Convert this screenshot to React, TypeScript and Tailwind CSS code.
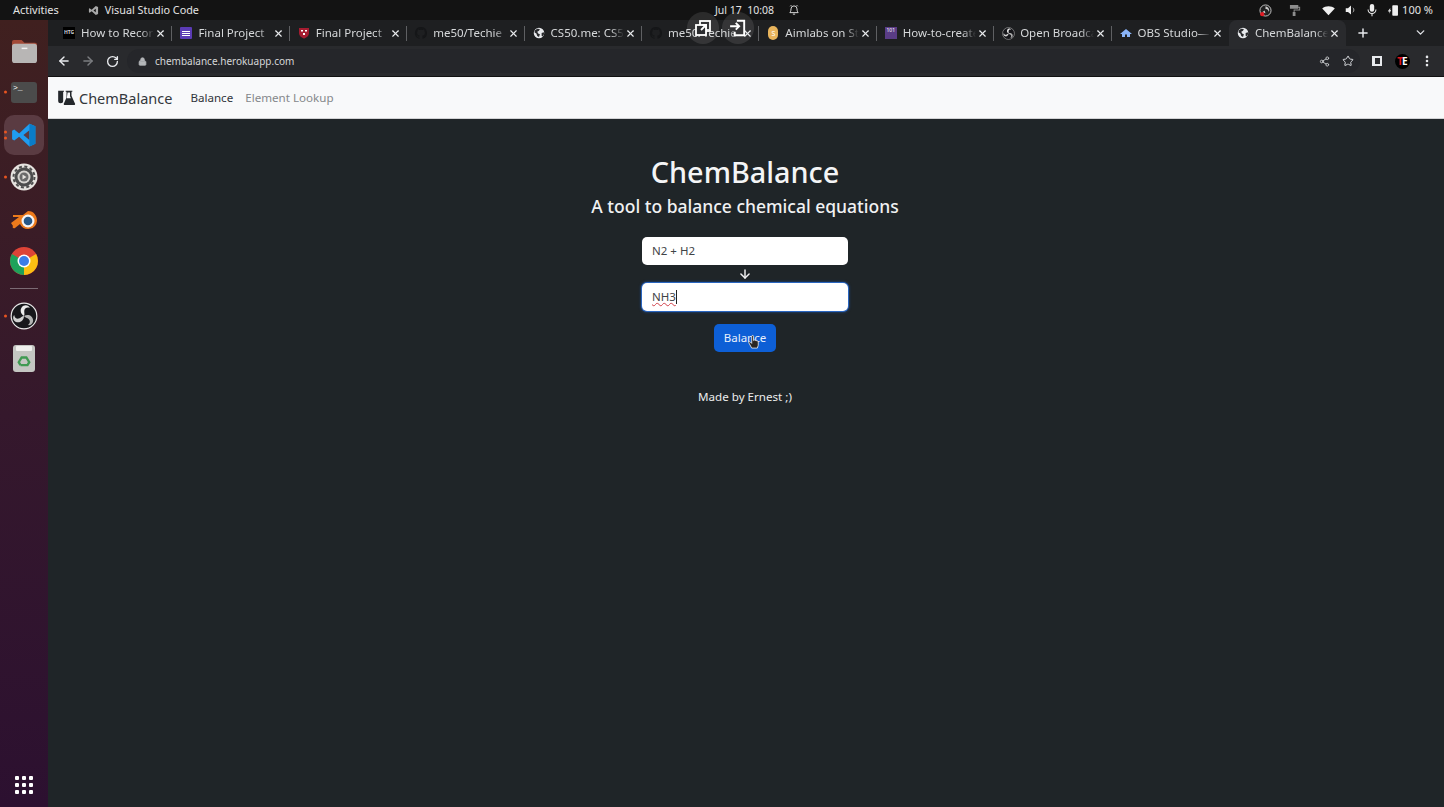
import { ArrowDown, ArrowLeft, ArrowRight, ChevronDown, Lock, MoreVertical, Plus, RotateCw, Share2, Star, X } from "lucide-react";

const sans = "font-['Noto_Sans',sans-serif]";

function Globe({ className = "" }: { className?: string }) {
  return (
    <svg viewBox="0 0 16 16" className={className}>
      <circle cx="8" cy="8" r="6" fill="#e8eaed" />
      <path d="M3 5l3-2 3 .5-1 2-2 1 1 2 2 1-1 3-2-1-1-3-2-1zM11 8l2.500-1 .5 2-2 3-1-1z" fill="#292a2d" />
    </svg>
  );
}

function GithubDark() {
  return (
    <svg viewBox="0 0 16 16" className="h-3.5 w-3.5 shrink-0" fill="#151618">
      <path d="M8 1a7 7 0 0 0-2.200 13.640c.350.060.480-.150.480-.340v-1.200c-1.950.420-2.360-.940-2.360-.940-.320-.810-.780-1.030-.780-1.030-.640-.430.050-.420.050-.420.700.050 1.070.720 1.070.720.630 1.070 1.640.760 2.040.580.060-.450.240-.760.440-.940-1.550-.180-3.190-.780-3.190-3.460 0-.760.270-1.390.720-1.880-.070-.180-.310-.890.070-1.850 0 0 .590-.190 1.920.720a6.700 6.700 0 0 1 3.500 0c1.330-.910 1.920-.720 1.920-.720.380.960.140 1.670.070 1.850.450.490.720 1.120.720 1.880 0 2.690-1.640 3.280-3.200 3.450.250.220.470.640.470 1.290v1.910c0 .190.130.410.480.340A7 7 0 0 0 8 1z" />
    </svg>
  );
}

function ObsMark({ size, ring = "#e8e8e8" }: { size: number; ring?: string }) {
  const blade = "M12 12C8.600 10 8 5.500 11.500 3.200 13.800 2 16.500 3.200 17 5.200 15 4.300 12.800 5 12.300 7c-.400 1.800.600 3.500-.300 5z";
  return (
    <svg width={size} height={size} viewBox="0 0 24 24" className="shrink-0">
      <circle cx="12" cy="12" r="11" fill="#17171b" stroke={ring} strokeWidth="1" />
      <path d={blade} fill="#ececec" />
      <path d={blade} fill="#b4b4b4" transform="rotate(120 12 12)" />
      <path d={blade} fill="#d0d0d0" transform="rotate(240 12 12)" />
    </svg>
  );
}

type Tab = { title: string; icon: React.ReactNode; active?: boolean };

const tabs: Tab[] = [
  { title: "How to Record", icon: <span className="flex h-3 w-3 items-center justify-center bg-black text-[5px] font-bold text-gray-300">HTG</span> },
  {
    title: "Final Project",
    icon: (
      <span className="flex h-3 w-3 flex-col items-center justify-center gap-[1px] rounded-[1px] bg-[#5b3bb5]">
        <span className="h-[1px] w-2 bg-white" />
        <span className="h-[1px] w-2 bg-white" />
        <span className="h-[1px] w-2 bg-white" />
      </span>
    ),
  },
  {
    title: "Final Project",
    icon: (
      <svg viewBox="0 0 12 12" className="h-3 w-3">
        <path d="M1 1h10v5c0 3-3 5-5 5.500C4 11 1 9 1 6z" fill="#a51c30" />
        <path d="M3 3h2v1.500H3zM7 3h2v1.500H7zM5 6h2v2H5z" fill="#fff" />
      </svg>
    ),
  },
  { title: "me50/Techie", icon: <GithubDark /> },
  { title: "CS50.me: CS50", icon: <Globe className="h-3.5 w-3.5" /> },
  { title: "me50/Techie", icon: <GithubDark /> },
  {
    title: "Aimlabs on Steam",
    icon: (
      <span className="flex h-3.5 w-2.5 items-center justify-center rounded-full bg-[#e8b45c] text-[7px] leading-none text-white">S</span>
    ),
  },
  {
    title: "How-to-create",
    icon: <span className="flex h-3 w-3 items-start justify-center bg-[#5a3c86] text-[5px] leading-[7px] text-white">101</span>,
  },
  { title: "Open Broadcaster", icon: <ObsMark size={13} ring="#bbb" /> },
  {
    title: "OBS Studio—",
    icon: (
      <svg viewBox="0 0 14 14" className="h-3.5 w-3.5">
        <path d="M1 8l6-5 6 5-2 0v3H8V8.500H6V11H3V8z" fill="#8ab4f8" />
      </svg>
    ),
  },
  { title: "ChemBalance", icon: <Globe className="h-3.5 w-3.5" />, active: true },
];

function TabItem({ tab, last }: { tab: Tab; last: boolean }) {
  return (
    <div
      className={`flex h-full w-[117.400px] shrink-0 items-center pl-[7px] ${
        tab.active ? "rounded-t-lg bg-[#292a2d]" : ""
      }`}
    >
      <span className="flex w-[14px] shrink-0 items-center justify-center">{tab.icon}</span>
      <span className="ml-[5px] min-w-0 flex-1 overflow-hidden whitespace-nowrap text-[11.500px] leading-4 text-[#d6d8da] [mask-image:linear-gradient(to_right,black_82%,transparent_100%)]">
        {tab.title}
      </span>
      <X className="ml-[1px] h-[11px] w-[11px] shrink-0 text-[#e8eaed]" strokeWidth={2.500} />
      <span className={`ml-[5px] h-[15px] w-px shrink-0 ${last || tab.active ? "" : "bg-[#5f6063]"}`} />
    </div>
  );
}

function TabStrip() {
  return (
    <div className="flex h-[26px] shrink-0 items-end bg-[#1e1f21] pl-[7px]">
      <div className="flex h-full">
        {tabs.map((tab, i) => (
          <TabItem key={i} tab={tab} last={i === tabs.length - 2} />
        ))}
      </div>
      <Plus className="ml-[10px] mb-[6px] h-[14px] w-[14px] text-[#e8eaed]" strokeWidth={2.500} />
      <ChevronDown className="ml-auto mr-[17px] mb-[7px] h-[13px] w-[13px] text-[#dfe1e5]" strokeWidth={2.500} />
    </div>
  );
}

function Toolbar() {
  return (
    <div className="flex h-[31px] shrink-0 items-center border-b border-[#111] bg-[#292a2d] pl-[9px] pr-[10px]">
      <ArrowLeft className="h-[14px] w-[14px] text-[#e8eaed]" strokeWidth={2.500} />
      <ArrowRight className="ml-[10px] h-[14px] w-[14px] text-[#7b7d80]" strokeWidth={2.500} />
      <RotateCw className="ml-[11px] h-[13px] w-[13px] text-[#e8eaed]" strokeWidth={2.500} />
      <div className="ml-[8px] flex h-[24px] flex-1 items-center rounded-full bg-[#25262a] pl-[11px] pr-[6px]">
        <Lock className="h-[9px] w-[9px] text-[#b4b6b9]" fill="#b4b6b9" strokeWidth={2} />
        <span className="ml-[8px] text-[10px] leading-4 text-[#d5d6d8]">chembalance.herokuapp.com</span>
        <Share2 className="ml-auto h-[11px] w-[11px] text-[#c8cacd]" strokeWidth={2} />
        <Star className="ml-[12px] h-[12px] w-[12px] text-[#d8dade]" strokeWidth={2} />
      </div>
      <span className="ml-[12px] flex h-[10px] w-[10px] items-center justify-end border-2 border-[#e8eaed] bg-[#e8eaed]">
        <span className="h-[6px] w-[5px] bg-[#292a2d]" />
      </span>
      <span className="relative ml-[13px] flex h-[15px] w-[15px] items-center justify-center rounded-full bg-black text-[10px] font-bold leading-none text-white">
        <span className="text-[#e0161b]">T</span>
        <span className="-ml-[1px]">E</span>
      </span>
      <MoreVertical className="ml-[10px] h-[14px] w-[14px] text-[#e8eaed]" strokeWidth={2.500} />
    </div>
  );
}

function Navbar() {
  return (
    <nav className="flex h-[42px] shrink-0 items-center border-b border-[#d2d3d5] bg-[#f8f9fa] pl-[9px]">
      <svg viewBox="0 0 20 18" className="h-[15px] w-[19px]" fill="#24282c">
        <path d="M0 1h7v1H6v11a3 3 0 0 1-6 0V2H0z" />
        <path d="M9 1h8v1h-1v5l4 9a1.200 1.200 0 0 1-1 2H8a1.200 1.200 0 0 1-1-2l3-7V2H9z" />
        <path d="M11.300 3h2.900v4.400l1.100 2.600h-5z" fill="#f8f9fa" />
      </svg>
      <span className="ml-[3px] text-[14.500px] leading-5 text-[#33373b]">ChemBalance</span>
      <span className="ml-[18px] text-[11.600px] leading-5 text-[#30343a]">Balance</span>
      <span className="ml-[12px] text-[11.600px] leading-5 text-[#85888b]">Element Lookup</span>
    </nav>
  );
}

function Main() {
  return (
    <main className="flex flex-1 flex-col items-center bg-[#1f2528] pr-[2px] pt-[35px] text-white">
      <h1 className="text-[28.800px] font-medium leading-[36px] text-[#f4f5f6]">ChemBalance</h1>
      <h2 className="mt-[2px] text-[17.500px] font-medium leading-[28px] text-[#f0f1f2]">A tool to balance chemical equations</h2>
      <div className="mt-[17px] flex h-[28px] w-[206px] items-center rounded-[5px] bg-white px-[10px] text-[11.500px] text-[#3f4347]">
        N2 + H2
      </div>
      <ArrowDown className="mt-[2px] h-[14px] w-[14px] text-[#f1f2f3]" strokeWidth={2.500} />
      <div className="mt-[2px] flex h-[28px] w-[206px] items-center rounded-[5px] bg-white px-[10px] text-[11.500px] text-[#3f4347] shadow-[0_0_0_1px_#2a66c0,0_0_2px_2px_rgba(30,80,160,0.4)]">
        <span className="underline decoration-[#d0404a] decoration-wavy decoration-[1px]">NH3</span>
        <span className="h-[14px] w-px bg-[#222]" />
      </div>
      <div className="relative mt-[13px] flex h-[28px] w-[62px] items-center justify-center rounded-[5px] bg-[#0d5fd6] text-[11.500px] text-[#e9f0fb]">
        Balance
        <svg viewBox="0 0 16 18" className="absolute left-[33px] top-[9px] h-[17px] w-[15px]">
          <path
            d="M5 16 2 10.500c-.5-1 .7-1.800 1.500-1L5 11V3.500c0-1.300 2-1.300 2 0V8l.5-.4c.5-.4 1.300-.2 1.500.4.600-.4 1.400-.1 1.500.5.700-.3 1.500 0 1.500.8V13l-1 3z"
            fill="#2a2623"
            stroke="#e8e8e8"
            strokeWidth="0.900"
          />
        </svg>
      </div>
      <p className="mt-[36px] text-[11.600px] leading-[18px] text-[#eceded]">Made by Ernest ;)</p>
    </main>
  );
}

function DockIcon({ children, dots = 0, active = false }: { children: React.ReactNode; dots?: number; active?: boolean }) {
  return (
    <div className="relative flex h-[40px] w-full items-center justify-center">
      {active && <span className="absolute left-[4px] top-0 h-[40px] w-[40px] rounded-[10px] bg-[#5a3b42]" />}
      {dots > 0 && (
        <span className="absolute left-[4px] top-1/2 flex -translate-y-1/2 flex-col gap-[3px]">
          {dots > 1 && <span className="h-[3px] w-[3px] rounded-full bg-[#e95420]" />}
          <span className="h-[3px] w-[3px] rounded-full bg-[#e95420]" />
        </span>
      )}
      <span className="relative flex">{children}</span>
    </div>
  );
}

function Dock() {
  return (
    <aside className="flex w-[48px] shrink-0 flex-col items-center bg-gradient-to-b from-[#40201f] via-[#35182c] to-[#2c1030] pt-[11px]">
      <DockIcon>
        <svg viewBox="0 0 28 26" className="h-[25px] w-[27px]">
          <path d="M1 3a2 2 0 0 1 2-2h8l3 3h11a2 2 0 0 1 2 2v3H1z" fill="#a24a38" />
          <rect x="1" y="5" width="26" height="20" rx="3" fill="#b8b6b5" />
          <rect x="11" y="9" width="6" height="1.500" fill="#f2f2f2" />
        </svg>
      </DockIcon>
      <div className="mt-[1px] w-full">
        <DockIcon dots={1}>
          <span className="flex h-[21px] w-[26px] rounded-[3px] bg-[#4b4b4b] pl-[2px] pt-[1px] font-['Liberation_Mono',monospace] text-[8px] leading-[9px] text-white">
            &gt;_
          </span>
        </DockIcon>
      </div>
      <div className="mt-[3px] w-full">
        <DockIcon dots={2} active>
          <svg viewBox="0 0 24 24" className="h-[26px] w-[26px]">
            <path d="M17 1.500 22.500 4v16L17 22.500 7.500 13.500 3 17 1 16V8l2-1 4.500 3.500zM17 7.500 11.500 12l5.500 4.500z" fill="#1f9cf0" />
            <path d="M17 1.500 22.500 4v16L17 22.500z" fill="#0a7cc8" />
          </svg>
        </DockIcon>
      </div>
      <div className="mt-[2px] w-full">
        <DockIcon dots={1}>
          <svg viewBox="0 0 28 28" className="h-[28px] w-[28px]">
            <circle cx="14" cy="14" r="13.500" fill="#e6e3df" />
            <circle cx="14" cy="14" r="9.500" fill="#4d4d4d" />
            <circle cx="14" cy="14" r="10.500" fill="none" stroke="#4d4d4d" strokeWidth="2" strokeDasharray="3 2.500" />
            <circle cx="14" cy="14" r="6.500" fill="#d8d5d1" />
            <circle cx="14" cy="14" r="4.500" fill="#6a6a6a" />
            <path d="M12.500 11.500l4 2.500-4 2.500z" fill="#e6e3df" />
          </svg>
        </DockIcon>
      </div>
      <div className="mt-[4px] w-full">
        <DockIcon>
          <svg viewBox="0 0 28 24" className="h-[24px] w-[28px]">
            <path d="M1 14l8-6H3V6h10l5-4c6 0 9 5 9 10a9 9 0 0 1-17 3l-5 4c-2 1-3-1-2-2z" fill="#ec7a1c" />
            <circle cx="18" cy="12" r="6.500" fill="#f5f5f5" />
            <circle cx="18" cy="12" r="4.300" fill="#265787" />
          </svg>
        </DockIcon>
      </div>
      <div className="w-full">
        <DockIcon>
          <svg viewBox="0 0 28 28" className="h-[28px] w-[28px]">
            <circle cx="14" cy="14" r="14" fill="#dd4437" />
            <path d="M14 14 26.100 7A14 14 0 0 1 14 28z" fill="#fbbf12" />
            <path d="M14 14 14 28A14 14 0 0 1 1.900 7z" fill="#1ea25a" />
            <circle cx="14" cy="14" r="6.500" fill="#fff" />
            <circle cx="14" cy="14" r="5" fill="#3b7de8" />
          </svg>
        </DockIcon>
      </div>
      <span className="my-[7px] h-px w-[28px] bg-[#7b6a74]" />
      <DockIcon dots={1}>
        <ObsMark size={28} />
      </DockIcon>
      <div className="mt-[2px] w-full">
        <DockIcon>
          <span className="flex h-[27px] w-[22px] flex-col items-center rounded-[3px] bg-[#c4c6c2] pt-[1px]">
            <span className="h-[5px] w-[16px] rounded-[1px] bg-[#efefed]" />
            <svg viewBox="0 0 12 12" className="mt-[3px] h-[14px] w-[14px]" fill="none" stroke="#3f9a52" strokeWidth="2">
              <path d="M3 9.500 1.500 7 4 3h4l2.500 4L9 9.500H3" />
            </svg>
          </span>
        </DockIcon>
      </div>
      <div className="mt-auto mb-[13px] grid grid-cols-3 gap-[3px]">
        {Array.from({ length: 9 }).map((_, i) => (
          <span key={i} className="h-[4px] w-[4px] rounded-[1px] bg-white" />
        ))}
      </div>
    </aside>
  );
}

function TopBar() {
  return (
    <header className="relative flex h-[20px] shrink-0 items-center bg-[#131313] pl-[13px] pr-[11px] text-[11px] leading-4 text-[#e3e3e3]">
      <span>Activities</span>
      <svg viewBox="0 0 24 24" className="ml-[29px] h-[11px] w-[11px]" fill="#a8a8a8">
        <path d="M17 2 22 4.500v15L17 22 8 13.500 3.500 17 2 16V8l1.500-1L8 10.500zM17 8l-5 4 5 4z" />
      </svg>
      <span className="ml-[6px] text-[10.800px]">Visual Studio Code</span>
      <div className="absolute left-[715px] top-0 flex h-[20px] items-center">
        <span className="text-[10.500px]">Jul 17&nbsp; 10:08</span>
        <svg viewBox="0 0 16 16" className="ml-[14px] h-[12px] w-[12px]" fill="none" stroke="#dcdcdc" strokeWidth="1.300">
          <path d="M8 2.500a4 4 0 0 1 4 4c0 3 1 4 1.500 5h-11c.5-1 1.500-2 1.500-5a4 4 0 0 1 4-4zM6.500 13.500h3M3 3l1.500-1.500M13 3l-1.500-1.500" />
        </svg>
      </div>
      <div className="ml-auto flex items-center">
        <svg viewBox="0 0 14 14" className="h-[13px] w-[13px]">
          <circle cx="7" cy="7" r="6" fill="#222" stroke="#ccc" />
          <path d="M7 2.500A4.500 4.500 0 0 1 10.500 9 3 3 0 0 0 7 5.500zM3.500 9 6 7l1 3z" fill="#ccc" />
          <circle cx="3.500" cy="11" r="2.300" fill="#e01b24" />
        </svg>
        <svg viewBox="0 0 14 14" className="ml-[17px] h-[13px] w-[13px]" fill="#8d8d8d">
          <path d="M1 1h9v2h2v4H6v1.500h1V13H4V8.500h1V6h6V4h-1v1H1z" />
        </svg>
        <svg viewBox="0 0 16 14" className="ml-[20px] h-[11px] w-[13px]" fill="#efefef">
          <path d="M0 4.500C4 .5 12 .5 16 4.500L8 13z" />
        </svg>
        <svg viewBox="0 0 16 16" className="ml-[10px] h-[12px] w-[12px]" fill="#efefef">
          <path d="M1 5.500h3L8 2v12l-4-3.500H1z" />
          <path d="M10.500 5a4 4 0 0 1 0 6" fill="none" stroke="#aaa" strokeWidth="1.300" />
        </svg>
        <svg viewBox="0 0 16 16" className="ml-[8px] h-[14px] w-[14px]">
          <rect x="5.500" y="1" width="5" height="9" rx="2.500" fill="#efefef" />
          <path d="M3.500 7.500a4.500 4.500 0 0 0 9 0M8 12v3" fill="none" stroke="#efefef" strokeWidth="1.200" />
        </svg>
        <svg viewBox="0 0 16 16" className="ml-[8px] h-[13px] w-[13px]">
          <path d="M1 9l3-4v2.500h1L3 12V9.500z" fill="#ddd" />
          <rect x="6.500" y="1.500" width="7" height="13" rx="1" fill="#efefef" />
        </svg>
        <span className="ml-[2px]">100 %</span>
      </div>
    </header>
  );
}

function PipOverlay() {
  return (
    <>
      <span className="absolute left-[687px] top-[12px] flex h-[32px] w-[32px] items-center justify-center rounded-full bg-white/10">
        <svg viewBox="0 0 16 16" className="h-[16px] w-[16px]" fill="none" stroke="#fff" strokeWidth="1.800">
          <rect x="5" y="1" width="10" height="10" />
          <rect x="1" y="5" width="10" height="10" fill="#2c2d30" />
          <path d="M6 10l5-5M7.500 5H11v3.500" />
        </svg>
      </span>
      <span className="absolute left-[722px] top-[12px] flex h-[32px] w-[32px] items-center justify-center rounded-full bg-white/10">
        <svg viewBox="0 0 16 16" className="h-[18px] w-[18px]" fill="none" stroke="#fff" strokeWidth="1.700">
          <path d="M7 1.500h6.500v13H5v-3" />
          <path d="M1 6.500h8M6 3.500l3 3-3 3" />
        </svg>
      </span>
    </>
  );
}

export default function App() {
  return (
    <div className={`relative flex h-[807px] w-[1444px] flex-col overflow-hidden ${sans}`}>
      <TopBar />
      <div className="flex min-h-0 flex-1">
        <Dock />
        <div className="flex min-w-0 flex-1 flex-col">
          <TabStrip />
          <Toolbar />
          <Navbar />
          <Main />
        </div>
      </div>
      <PipOverlay />
    </div>
  );
}
